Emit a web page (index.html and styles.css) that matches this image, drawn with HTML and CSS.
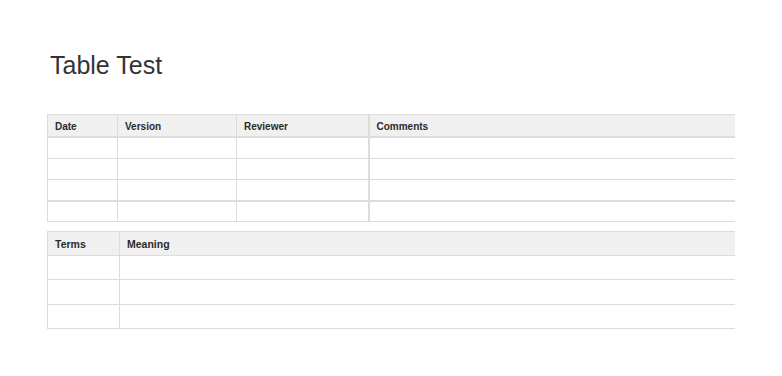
FILE: index.html
```html
<!DOCTYPE html>
<html lang="en">
<head>
<meta charset="utf-8">
<title>Table Test</title>
<link rel="stylesheet" href="styles.css">
</head>
<body>
<main class="page">
  <h1 class="title">Table Test</h1>

  <div class="table-wrap">
    <table class="grid grid-history">
      <colgroup>
        <col class="c-date"><col class="c-version"><col class="c-reviewer"><col class="c-comments">
      </colgroup>
      <thead>
        <tr><th>Date</th><th>Version</th><th>Reviewer</th><th class="split">Comments</th></tr>
      </thead>
      <tbody>
        <tr><td></td><td></td><td></td><td class="split"></td></tr>
        <tr><td></td><td></td><td></td><td class="split"></td></tr>
        <tr><td></td><td></td><td></td><td class="split"></td></tr>
        <tr class="row-break"><td></td><td></td><td></td><td class="split"></td></tr>
      </tbody>
    </table>
  </div>

  <div class="table-wrap">
    <table class="grid grid-terms">
      <colgroup>
        <col class="c-term"><col class="c-meaning">
      </colgroup>
      <thead>
        <tr><th>Terms</th><th>Meaning</th></tr>
      </thead>
      <tbody>
        <tr><td></td><td></td></tr>
        <tr><td></td><td></td></tr>
        <tr><td></td><td></td></tr>
      </tbody>
    </table>
  </div>
</main>
</body>
</html>
```

FILE: styles.css
```css
html, body {
  margin: 0;
  padding: 0;
  background: #fff;
}

body {
  font-family: "Liberation Sans", Arial, Helvetica, sans-serif;
  color: #333;
}

.page {
  padding: 50px 0 0 47px;
}

.title {
  margin: 0 0 33px 3px;
  font-size: 25px;
  font-weight: normal;
  line-height: 31px;
  color: #333;
}

/* tables run wider than the content area and are cut off at its edge */
.table-wrap {
  width: 688px;
  overflow: hidden;
}

.grid {
  border-collapse: collapse;
  table-layout: fixed;
  width: 900px;
}

.grid th,
.grid td {
  border: 1px solid #dcdcdc;
  padding: 0 7px;
  text-align: left;
  vertical-align: middle;
}

.grid th {
  background: #f0f0f0;
  font-weight: bold;
  color: #2b2b2b;
}

/* change history */
.grid-history {
  margin-bottom: 9px;
}

.grid-history th {
  font-size: 10px;
  height: 19px;
  padding-top: 2px;
  border-bottom-width: 2px;
}

.grid-history td {
  height: 20px;
}

.grid-history .split {
  border-left-width: 2px;
}

.grid-history .row-break td {
  height: 19px;
  border-top-width: 2px;
}

.c-date { width: 70px; }
.c-version { width: 119px; }
.c-reviewer { width: 132px; }

/* glossary */
.grid-terms th {
  font-size: 10.5px;
  height: 23px;
}

.grid-terms td {
  height: 23px;
}

.grid-terms tbody tr:nth-child(2) td {
  height: 24px;
}

.c-term { width: 72px; }
```
